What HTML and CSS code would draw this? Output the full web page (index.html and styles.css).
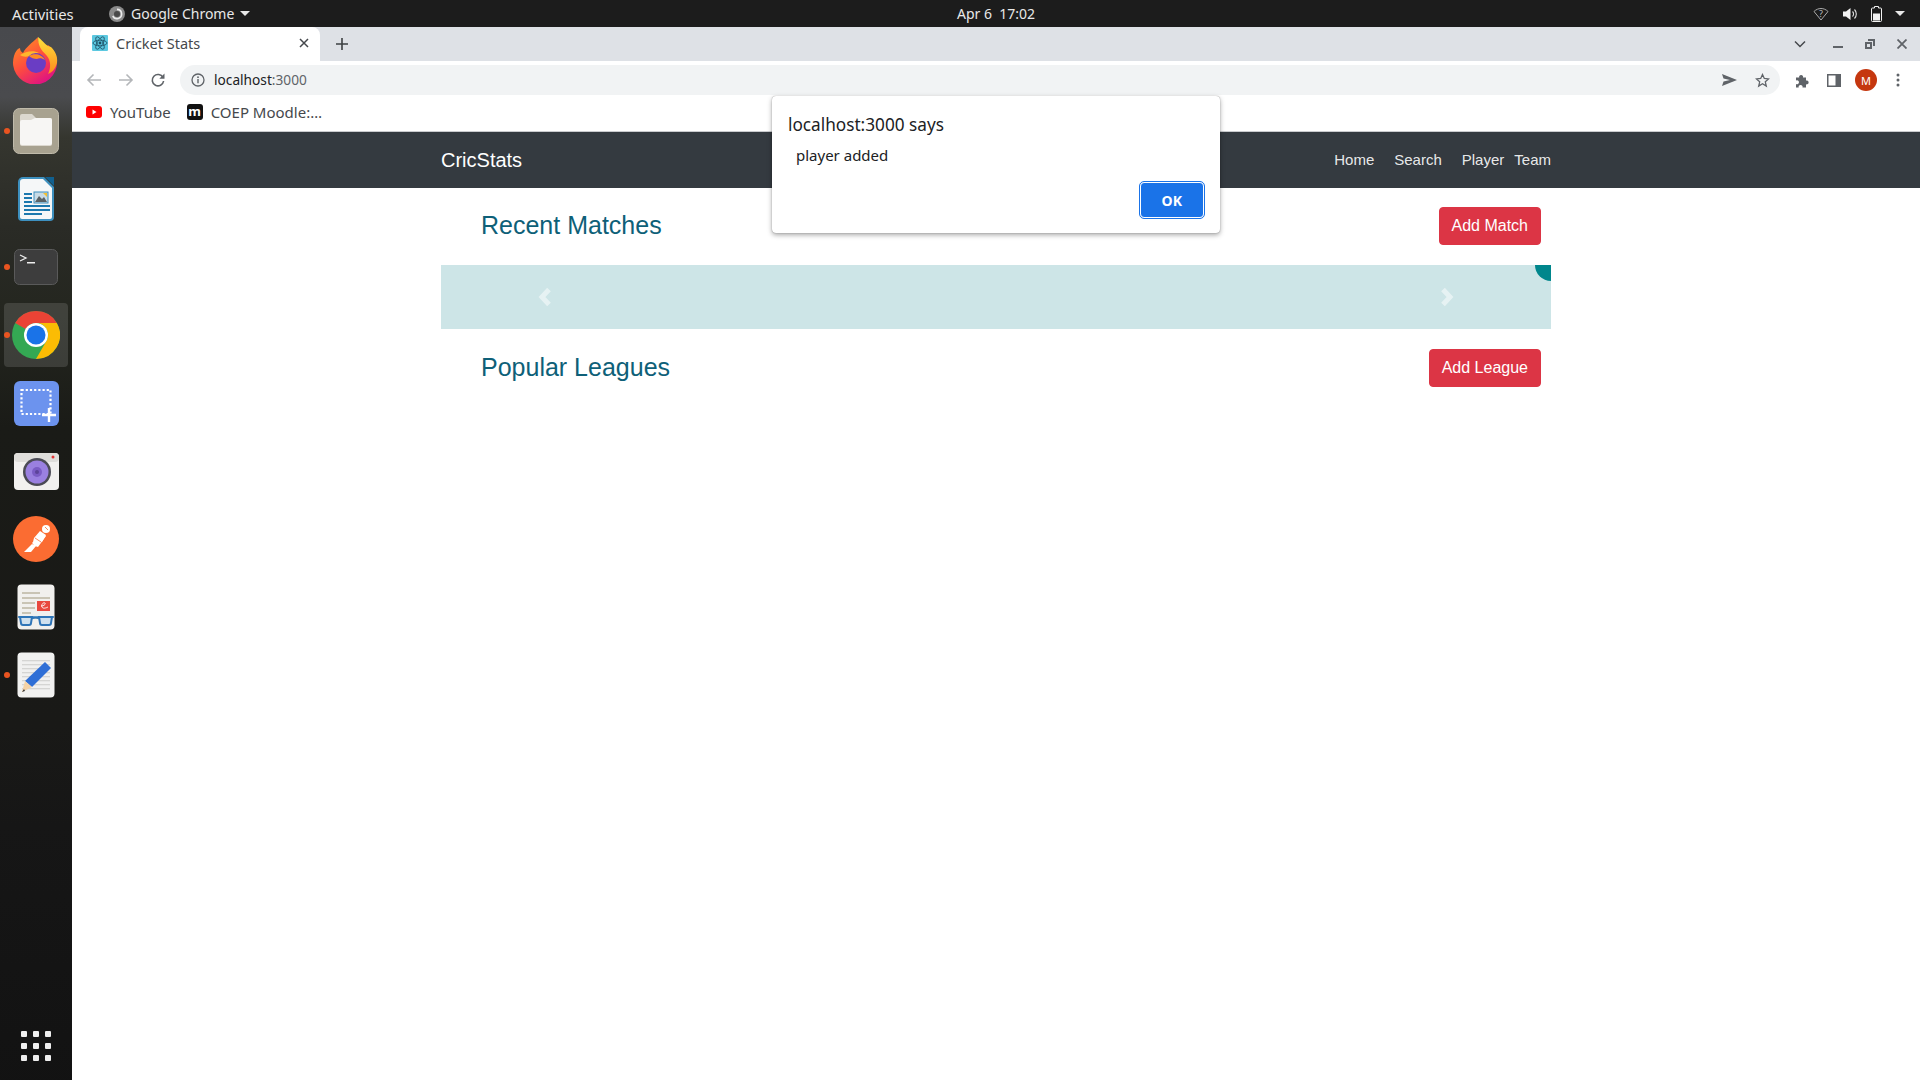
FILE: index.html
```html
<!DOCTYPE html>
<html lang="en">
<head>
<meta charset="utf-8">
<title>Cricket Stats</title>
<link rel="stylesheet" href="styles.css">
</head>
<body>
<header class="topbar">
  <div class="top-left">
    <span class="activities">Activities</span>
    <span class="app-menu">
      <svg class="app-icon" width="16" height="16" viewBox="0 0 16 16"><circle cx="8" cy="8" r="8" fill="#8a8a8a"/><path d="M8 3.400a4.600 4.600 0 1 1-4.200 6.500" fill="none" stroke="#ececec" stroke-width="1.600"/><circle cx="8" cy="8" r="3" fill="#4a4a4a"/></svg>
      <span>Google Chrome</span>
      <span class="caret"></span>
    </span>
  </div>
  <div class="clock">Apr 6&nbsp; 17:02</div>
  <div class="top-right">
    <svg width="16" height="14" viewBox="0 0 16 14"><path d="M1 4.500 C5 .5 11 .5 15 4.500 L8 13 Z" fill="none" stroke="#aaa" stroke-width="1"/><text x="8" y="9.500" class="wifi-q">?</text></svg>
    <svg width="16" height="14" viewBox="0 0 16 14"><path d="M1 4.500h3L8.500 1v12L4 9.500H1z" fill="#f2f2f2"/><path d="M10.500 4.500a3.500 3.500 0 0 1 0 5M12.500 2.500a6.500 6.500 0 0 1 0 9" fill="none" stroke="#e0e0e0" stroke-width="1.100"/></svg>
    <svg width="11" height="16" viewBox="0 0 11 16"><path d="M3.500.5h4v1.500h2a1 1 0 0 1 1 1v11.500a1 1 0 0 1-1 1h-8a1 1 0 0 1-1-1V3a1 1 0 0 1 1-1h2z" fill="none" stroke="#f2f2f2"/><rect x="2" y="7.500" width="7" height="7" fill="#f2f2f2"/></svg>
    <span class="caret wide"></span>
  </div>
</header>

<div class="desktop">
  <nav class="dock">
    <div class="dock-item raised">
      <svg width="46" height="48" viewBox="0 0 46 48"><defs><linearGradient id="ff" x1="0" y1="0" x2="0.6" y2="1"><stop offset="0" stop-color="#ff9a1f"/><stop offset=".55" stop-color="#ff4f3c"/><stop offset="1" stop-color="#e0157f"/></linearGradient><linearGradient id="ff2" x1="0.5" y1="0" x2="0.5" y2="1"><stop offset="0" stop-color="#ffe23c"/><stop offset="1" stop-color="#ff8a1c"/></linearGradient></defs><path d="M25 1c-1 5 4 9 8 12 1-1 1-3 2-4 5 4 9 10 9 17a22 22 0 1 1-43-6c1-4 3-7 6-8 0 2 1 4 3 5 3-6 9-10 15-16z" fill="url(#ff)"/><path d="M25 1c6 5 8 9 13 10 4 4 7 9 6 16-2 7-5 9-9 11 3-6 3-13-1-18-3-4-9-7-9-19z" fill="url(#ff2)"/><path d="M7 19c6-4 14-5 19-2-5 0-6 2-7 3-3 0-8 2-12-1z" fill="#ffb72c"/><circle cx="23" cy="27" r="10" fill="#6a3dc4"/><path d="M16 20c5-3 13-2 16 4-3-2-6-2-8-1-3 0-6-1-8-3z" fill="#ff8a24"/></svg>
    </div>
    <div class="dock-item">
      <span class="run-dot"></span>
      <svg width="46" height="46" viewBox="0 0 46 46"><rect x=".5" y=".5" width="45" height="45" rx="6" fill="#a8a290" stroke="#c0bbab"/><path d="M7 8a2 2 0 0 1 2-2h10l4 4h14a2 2 0 0 1 2 2v24a2 2 0 0 1-2 2H9a2 2 0 0 1-2-2z" fill="#dcd8cf"/><path d="M7 14a2 2 0 0 1 2-2h9l4-2h15a2 2 0 0 1 2 2v23a2 2 0 0 1-2 2H9a2 2 0 0 1-2-2z" fill="#f7f6f4"/></svg>
    </div>
    <div class="dock-item">
      <svg width="38" height="46" viewBox="0 0 38 46"><path d="M6 1h21l10 10v30a4 4 0 0 1-4 4H5a4 4 0 0 1-4-4V6a5 5 0 0 1 5-5z" fill="#3d90bf"/><path d="M6 3h20l9 9v29a2 2 0 0 1-2 2H5a2 2 0 0 1-2-2V6a3 3 0 0 1 3-3z" fill="#f5f7f8"/><path d="M28 1l9 0v9z" fill="#11608f"/><g fill="#1c78ae"><rect x="7" y="17" width="8" height="2"/><rect x="7" y="21" width="8" height="2"/><rect x="7" y="25" width="8" height="2"/><rect x="7" y="29" width="26" height="2"/><rect x="7" y="33" width="26" height="2"/><rect x="7" y="37" width="18" height="2"/></g><rect x="17" y="16" width="14" height="11" fill="#c8dbe6" stroke="#3f8fbd"/><path d="M18 26l4-6 3 3 2-2 3 5z" fill="#5a6266"/><path d="M26 17h4v4z" fill="#f4c02e"/></svg>
    </div>
    <div class="dock-item">
      <span class="run-dot"></span>
      <svg width="44" height="36" viewBox="0 0 44 36"><rect x=".5" y=".5" width="43" height="35" rx="5" fill="#3d3d3d" stroke="#5a5a5a"/><path d="M6 6l6 3-6 3" fill="none" stroke="#eee" stroke-width="1.300"/><rect x="13" y="13" width="8" height="1.500" fill="#eee"/></svg>
    </div>
    <div class="dock-item active">
      <span class="run-dot"></span>
      <svg width="48" height="48" viewBox="0 0 48 48"><circle cx="24" cy="24" r="24" fill="#34a853"/><path d="M24 0a24 24 0 0 1 20.800 12H24a12 12 0 0 0-10.400 6L3.200 12A24 24 0 0 1 24 0z" fill="#ea4335"/><path d="M44.800 12A24 24 0 0 1 24 48l10.400-18A12 12 0 0 0 24 12z" fill="#fbbc04"/><circle cx="24" cy="24" r="12" fill="#fff"/><circle cx="24" cy="24" r="9.500" fill="#1a73e8"/></svg>
    </div>
    <div class="dock-item">
      <svg width="45" height="45" viewBox="0 0 45 45"><rect width="45" height="45" rx="6" fill="#6c93ee"/><rect x="7.500" y="9" width="29" height="24" fill="none" stroke="#fff" stroke-width="2.200" stroke-dasharray="2.200 2"/><path d="M35 27v14M28 34h14" stroke="#fff" stroke-width="2.400"/></svg>
    </div>
    <div class="dock-item">
      <svg width="45" height="37" viewBox="0 0 45 37"><rect width="45" height="37" rx="4" fill="#f2f1ef"/><rect width="45" height="9" rx="4" fill="#dfdedb"/><circle cx="23" cy="19" r="14" fill="#4b4b55"/><circle cx="23" cy="19" r="11.500" fill="#9a80e0"/><circle cx="23" cy="19" r="5" fill="#7a5cc4"/><circle cx="23" cy="19" r="2" fill="#5c4399"/><circle cx="39" cy="4" r="1.500" fill="#e43535"/></svg>
    </div>
    <div class="dock-item">
      <svg width="46" height="46" viewBox="0 0 46 46"><circle cx="23" cy="23" r="23" fill="#fb6c32"/><path d="M11 36l8-8 4 2-5 6zM19 27l9-10 5 3-8 11-3-1z" fill="#fff"/><path d="M27 15l6 4-4 7-7-1-2 1 1-4z" fill="#fff"/><circle cx="33" cy="13" r="4" fill="#fff"/><path d="M32 11l3 3M22 22l6 4" stroke="#fb6c32" stroke-width=".8"/></svg>
    </div>
    <div class="dock-item">
      <svg width="38" height="46" viewBox="0 0 38 46"><rect width="37" height="45" x=".5" y=".5" rx="4" fill="#f1f0ee"/><g fill="#c9c4b5"><rect x="5" y="8" width="18" height="2"/><rect x="5" y="13" width="28" height="2"/><rect x="5" y="18" width="13" height="2"/><rect x="5" y="23" width="13" height="2"/><rect x="5" y="28" width="9" height="2"/><rect x="5" y="33" width="28" height="2"/></g><rect x="20" y="17" width="13" height="10" fill="#e8483f"/><path d="M24 22c3 0 5-2 4-3-2-1-4 2-3 4 1 2 4 1 6 0" fill="none" stroke="#fff" stroke-width=".9"/><g fill="#cfe0ee" stroke="#2f75b8" stroke-width="2"><path d="M3 33h12l-1 6a2 2 0 0 1-2 2H6a2 2 0 0 1-2-2z"/><path d="M22 33h13l-1 6a2 2 0 0 1-2 2h-7a2 2 0 0 1-2-2z"/></g><path d="M15 34.500c2-1 5-1 7 0M1 33h36" stroke="#2f75b8" stroke-width="1.600" fill="none"/></svg>
    </div>
    <div class="dock-item">
      <span class="run-dot"></span>
      <svg width="38" height="46" viewBox="0 0 38 46"><rect width="37" height="45" x=".5" y=".5" rx="4" fill="#f1f1f0"/><g fill="#d5d5d3"><rect x="5" y="8" width="28" height="1.300"/><rect x="5" y="12" width="28" height="1.300"/><rect x="5" y="16" width="28" height="1.300"/><rect x="5" y="20" width="28" height="1.300"/><rect x="5" y="24" width="28" height="1.300"/><rect x="5" y="28" width="28" height="1.300"/><rect x="5" y="32" width="28" height="1.300"/><rect x="5" y="36" width="28" height="1.300"/></g><path d="M28 10l6 6-19 19-7-6z" fill="#2f6fd6"/><path d="M8 29l7 6-10 5z" fill="#f4d2a6"/><path d="M7 37l-2 3 3-1z" fill="#333"/></svg>
    </div>
    <div class="app-grid">
      <i></i><i></i><i></i><i></i><i></i><i></i><i></i><i></i><i></i>
    </div>
  </nav>

  <main class="browser">
    <div class="tabstrip">
      <div class="tab">
        <span class="favicon">
          <svg width="16" height="16" viewBox="0 0 16 16"><rect width="16" height="16" rx="1" fill="#5cc8e0"/><g fill="none" stroke="#1d4f63" stroke-width=".8"><ellipse cx="8" cy="8" rx="7" ry="2.800"/><ellipse cx="8" cy="8" rx="7" ry="2.800" transform="rotate(60 8 8)"/><ellipse cx="8" cy="8" rx="7" ry="2.800" transform="rotate(120 8 8)"/></g><circle cx="8" cy="8" r="1.400" fill="#1d4f63"/></svg>
        </span>
        <span class="tab-title">Cricket Stats</span>
        <svg class="tab-close" width="10" height="10" viewBox="0 0 10 10"><path d="M1 1l8 8M9 1l-8 8" stroke="#45484c" stroke-width="1.500"/></svg>
      </div>
      <svg class="new-tab" width="12" height="12" viewBox="0 0 12 12"><path d="M6 0v12M0 6h12" stroke="#3c4043" stroke-width="1.600"/></svg>
      <div class="win-controls">
        <svg class="win-chevron" width="12" height="8" viewBox="0 0 12 8"><path d="M1 1.500l5 5 5-5" fill="none" stroke="#45484c" stroke-width="1.500"/></svg>
        <svg width="10" height="10" viewBox="0 0 10 10"><rect y="7" width="10" height="2" fill="#5f6368"/></svg>
        <svg width="10" height="10" viewBox="0 0 10 10"><path d="M3 0h7v7H8V2H3z" fill="#5f6368"/><path d="M0 3h7v7H0zM2 5v3h3V5z" fill="#5f6368" fill-rule="evenodd"/></svg>
        <svg width="10" height="10" viewBox="0 0 10 10"><path d="M.5.500l9 9M9.500.500l-9 9" stroke="#5f6368" stroke-width="1.800"/></svg>
      </div>
    </div>

    <div class="toolbar">
      <div class="nav-buttons">
        <svg width="16" height="14" viewBox="0 0 16 14"><path d="M15 7H2M7.500 1.500L2 7l5.500 5.500" fill="none" stroke="#b4b6b9" stroke-width="1.600"/></svg>
        <svg width="16" height="14" viewBox="0 0 16 14"><path d="M1 7h13M8.500 1.500L14 7l-5.500 5.500" fill="none" stroke="#b4b6b9" stroke-width="1.600"/></svg>
        <svg width="16" height="16" viewBox="0 0 16 16"><path d="M13 5.500A5.700 5.700 0 1 0 13.600 9" fill="none" stroke="#5f6368" stroke-width="1.600"/><path d="M14.500 1.500v5.200H9.300z" fill="#5f6368"/></svg>
      </div>
      <div class="omnibox">
        <svg width="14" height="14" viewBox="0 0 14 14"><circle cx="7" cy="7" r="6" fill="none" stroke="#5f6368" stroke-width="1.300"/><path d="M7 6v4.200" stroke="#5f6368" stroke-width="1.400"/><circle cx="7" cy="4.200" r=".9" fill="#5f6368"/></svg>
        <span class="url">localhost<span class="url-port">:3000</span></span>
        <span class="omni-actions">
          <svg width="15" height="12" viewBox="0 0 15 12"><path d="M0 0l15 6-15 6 1.500-4.500L8 6 1.500 4.500z" fill="#5f6368"/></svg>
          <svg width="15" height="15" viewBox="0 0 15 15"><path d="M7.500 1.500l1.800 4 4.300.4-3.300 2.900 1 4.300-3.800-2.300-3.800 2.300 1-4.300L1.400 5.900l4.300-.4z" fill="none" stroke="#5f6368" stroke-width="1.300"/></svg>
        </span>
      </div>
      <div class="tool-actions">
        <svg width="15" height="15" viewBox="0 0 15 15"><path d="M1 4.500h3.200a2 2 0 1 1 3.800 0H11v3a2 2 0 1 1 0 3.800V14.500H7.500a2 2 0 1 0-3.800 0H1v-3.500a2 2 0 1 0 0-3.500z" fill="#5f6368"/></svg>
        <svg width="14" height="13" viewBox="0 0 14 13"><path d="M0 0h14v13H0zM1.500 1.500v10H8.500v-10z" fill="#5f6368" fill-rule="evenodd"/></svg>
        <span class="avatar">M</span>
        <svg class="kebab" width="4" height="14" viewBox="0 0 4 14"><circle cx="2" cy="2" r="1.500" fill="#5f6368"/><circle cx="2" cy="7" r="1.500" fill="#5f6368"/><circle cx="2" cy="12" r="1.500" fill="#5f6368"/></svg>
      </div>
    </div>

    <div class="bookmarks">
      <span class="bookmark">
        <svg width="16" height="12" viewBox="0 0 16 12"><rect width="16" height="12" rx="3" fill="#f00"/><path d="M6.500 3.500l4 2.500-4 2.500z" fill="#fff"/></svg>
        <span>YouTube</span>
      </span>
      <span class="bookmark">
        <span class="moodle">m</span>
        <span>COEP Moodle:…</span>
      </span>
    </div>

    <div class="page">
      <div class="navbar">
        <div class="container nav-inner">
          <span class="brand">CricStats</span>
          <div class="nav-links">
            <span class="nav-link">Home</span>
            <span class="nav-link">Search</span>
            <span class="nav-link tight">Player</span>
            <span class="nav-link last">Team</span>
          </div>
        </div>
      </div>
      <div class="container content">
        <div class="section-row">
          <h2 class="section-title">Recent Matches</h2>
          <button class="btn-red">Add Match</button>
        </div>
        <div class="carousel">
          <svg width="14" height="20" viewBox="0 0 14 20"><path d="M11 2.500L4 10l7 7.500" fill="none" stroke="#fff" stroke-opacity=".5" stroke-width="5"/></svg>
          <svg width="14" height="20" viewBox="0 0 14 20"><path d="M3 2.500L10 10l-7 7.500" fill="none" stroke="#fff" stroke-opacity=".5" stroke-width="5"/></svg>
          <span class="carousel-corner"></span>
        </div>
        <div class="section-row">
          <h2 class="section-title">Popular Leagues</h2>
          <button class="btn-red">Add League</button>
        </div>
      </div>
    </div>
  </main>
</div>

<div class="dialog">
  <div class="dialog-title">localhost:3000 says</div>
  <div class="dialog-msg">player added</div>
  <div class="dialog-actions"><button class="dialog-ok">OK</button></div>
</div>
</body>
</html>
```

FILE: styles.css
```css
* { box-sizing: border-box; }
html, body { margin: 0; height: 100%; }
body {
  width: 1920px;
  height: 1080px;
  overflow: hidden;
  display: flex;
  flex-direction: column;
  font-family: "Liberation Sans", Arial, sans-serif;
  background: #fff;
}

/* GNOME top bar */
.topbar {
  height: 27px;
  flex: none;
  background: #1c1c1c;
  color: #e8e8e8;
  font-family: "Noto Sans", sans-serif;
  font-size: 14px;
  display: grid;
  grid-template-columns: 1fr auto 1fr;
  align-items: center;
  padding: 0 12px;
}
.top-left { display: flex; align-items: center; }
.activities { width: 97px; font-size: 14.800px; }
.app-menu { display: flex; align-items: center; gap: 6px; }
.caret {
  width: 0; height: 0;
  border-left: 5px solid transparent;
  border-right: 5px solid transparent;
  border-top: 5px solid #e8e8e8;
}
.caret.wide { margin-left: 0; margin-right: 3px; }
.clock { font-size: 14px; transform: translateX(36px); }
.top-right { display: flex; align-items: center; justify-content: flex-end; gap: 13px; }
.wifi-q { font-size: 9px; fill: #bbb; text-anchor: middle; font-family: "Noto Sans", sans-serif; }

.desktop { flex: 1; display: flex; min-height: 0; }

/* Dock */
.dock {
  width: 72px;
  flex: none;
  display: flex;
  flex-direction: column;
  padding-top: 2px;
  padding-bottom: 19px;
  background: linear-gradient(180deg, #48494d 0, #4a4b4e 70px, #35362f 110px, #2a2b26 200px, #24261f 290px, #1a1b17 400px, #191917 700px, #161616 800px, #121212 1080px);
}
.dock-item {
  position: relative;
  height: 68px;
  flex: none;
  display: flex;
  align-items: center;
  justify-content: center;
}
.dock-item.raised svg { margin-bottom: 6px; }
.dock-item.active::before {
  content: "";
  position: absolute;
  left: 4px; right: 4px; top: 2px; bottom: 2px;
  background: rgba(255,255,255,.13);
  border-radius: 4px;
}
.dock-item svg { position: relative; }
.run-dot {
  position: absolute;
  left: 4px; top: 50%;
  width: 6px; height: 6px;
  margin-top: -3px;
  border-radius: 50%;
  background: #e95420;
  z-index: 1;
}
.app-grid {
  margin-top: auto;
  align-self: center;
  display: grid;
  grid-template-columns: repeat(3, 6px);
  gap: 6px;
}
.app-grid i { width: 6px; height: 6px; background: #eee; border-radius: 1px; }

/* Chrome */
.browser { flex: 1; min-width: 0; display: flex; flex-direction: column; }
.tabstrip {
  height: 34px;
  flex: none;
  background: #dee1e6;
  display: flex;
  align-items: center;
  padding-left: 8px;
}
.tab {
  width: 240px;
  height: 34px;
  align-self: flex-end;
  background: #fff;
  border-radius: 8px 8px 0 0;
  display: flex;
  align-items: center;
  padding: 0 12px 2px 12px;
  font-family: "Noto Sans", sans-serif;
  font-size: 14.500px;
  color: #45484c;
}
.favicon { display: flex; margin-right: 8px; }
.tab-title { flex: 1; }
.tab-close { margin-right: -1px; }
.new-tab { margin-left: 16px; }
.win-controls {
  margin-left: auto;
  display: flex;
  align-items: center;
  gap: 22px;
  padding-right: 13px;
}
.win-chevron { margin-right: 4px; transform: translateX(-1px); }
.toolbar {
  height: 38px;
  flex: none;
  display: flex;
  align-items: center;
  padding: 0 18px 0 14px;
  background: #fff;
}
.nav-buttons { display: flex; align-items: center; gap: 16px; width: 94px; }
.omnibox {
  width: 1600px;
  height: 30px;
  flex: none;
  background: #f1f3f4;
  border-radius: 15px;
  display: flex;
  align-items: center;
  padding: 0 10px 0 11px;
  font-family: "Noto Sans", sans-serif;
  font-size: 13.700px;
}
.url { margin-left: 9px; margin-bottom: 1px; color: #202124; }
.url-port { color: #5f6368; }
.omni-actions { margin-left: auto; display: flex; align-items: center; gap: 18px; }
.tool-actions { display: flex; align-items: center; gap: 17px; margin-left: 15px; }
.avatar {
  width: 22px; height: 22px;
  margin-left: -3px;
  border-radius: 50%;
  background: #c5370f;
  color: #fff;
  font-size: 11px;
  display: flex;
  align-items: center;
  justify-content: center;
  font-family: "Noto Sans", sans-serif;
}
.kebab { margin-left: 2px; }
.bookmarks {
  height: 33px;
  flex: none;
  display: flex;
  align-items: center;
  gap: 16px;
  padding: 0 0 7px 14px;
  background: #fff;
  border-bottom: 1px solid #c9cbce;
  font-family: "Noto Sans", sans-serif;
  font-size: 15px;
  color: #45484c;
}
.bookmark { display: flex; align-items: center; gap: 8px; }
.moodle {
  width: 16px; height: 16px;
  background: #111;
  border-radius: 3px;
  color: #fff;
  font-weight: 700;
  font-size: 13px;
  line-height: 14px;
  text-align: center;
}

/* Page */
.page { flex: 1; background: #fff; }
.container { width: 1140px; margin: 0 auto; padding: 0 15px; }
.navbar { height: 56px; background: #343a40; }
.nav-inner { height: 100%; display: flex; align-items: center; justify-content: space-between; }
.brand { font-size: 20px; color: #fff; }
.nav-links { display: flex; align-items: center; padding-bottom: 2px; }
.nav-link { font-size: 15px; color: rgba(255,255,255,.9); margin-right: 20px; }
.nav-link.tight { margin-right: 10px; }
.nav-link.last { margin-right: 0; }
.content { padding-top: 19px; }
.section-row {
  display: flex;
  align-items: center;
  justify-content: space-between;
  padding: 0 10px 0 40px;
  height: 38px;
}
.section-title { margin: 0 0 2px; font-size: 25px; font-weight: 400; color: #0e6078; }
.btn-red {
  height: 38px;
  padding: 0 12px;
  background: #dc3545;
  color: #fff;
  border: 1px solid #dc3545;
  border-radius: 4px;
  font: 16px "Liberation Sans", Arial, sans-serif;
}
.carousel {
  position: relative;
  height: 64px;
  margin: 20px 0;
  background: #cde5e7;
  display: flex;
  align-items: center;
  justify-content: space-between;
  padding: 0 97px;
  overflow: hidden;
}
.carousel-corner {
  position: absolute;
  right: -16px; top: -16px;
  width: 32px; height: 32px;
  border-radius: 50%;
  background: #00868c;
}

/* Native alert */
.dialog {
  position: absolute;
  left: 772px; top: 96px;
  width: 448px; height: 137px;
  background: #fff;
  border-radius: 4px;
  box-shadow: 0 0 1px rgba(0,0,0,.45), 0 2px 5px rgba(0,0,0,.35);
  padding: 17px 16px 16px;
  font-family: "Noto Sans", sans-serif;
  color: #202124;
}
.dialog-title { font-size: 17.200px; line-height: 24px; }
.dialog-msg { font-size: 15px; line-height: 20px; margin: 8px 0 0 8px; }
.dialog-actions { display: flex; justify-content: flex-end; margin-top: 17px; }
.dialog-ok {
  width: 64px; height: 36px;
  background: #1a73e8;
  color: #fff;
  border: 1px solid #fff;
  outline: 1px solid #1a73e8;
  outline-offset: 0;
  border-radius: 4px;
  font: 700 14px "Noto Sans", sans-serif;
  letter-spacing: .3px;
}
```
